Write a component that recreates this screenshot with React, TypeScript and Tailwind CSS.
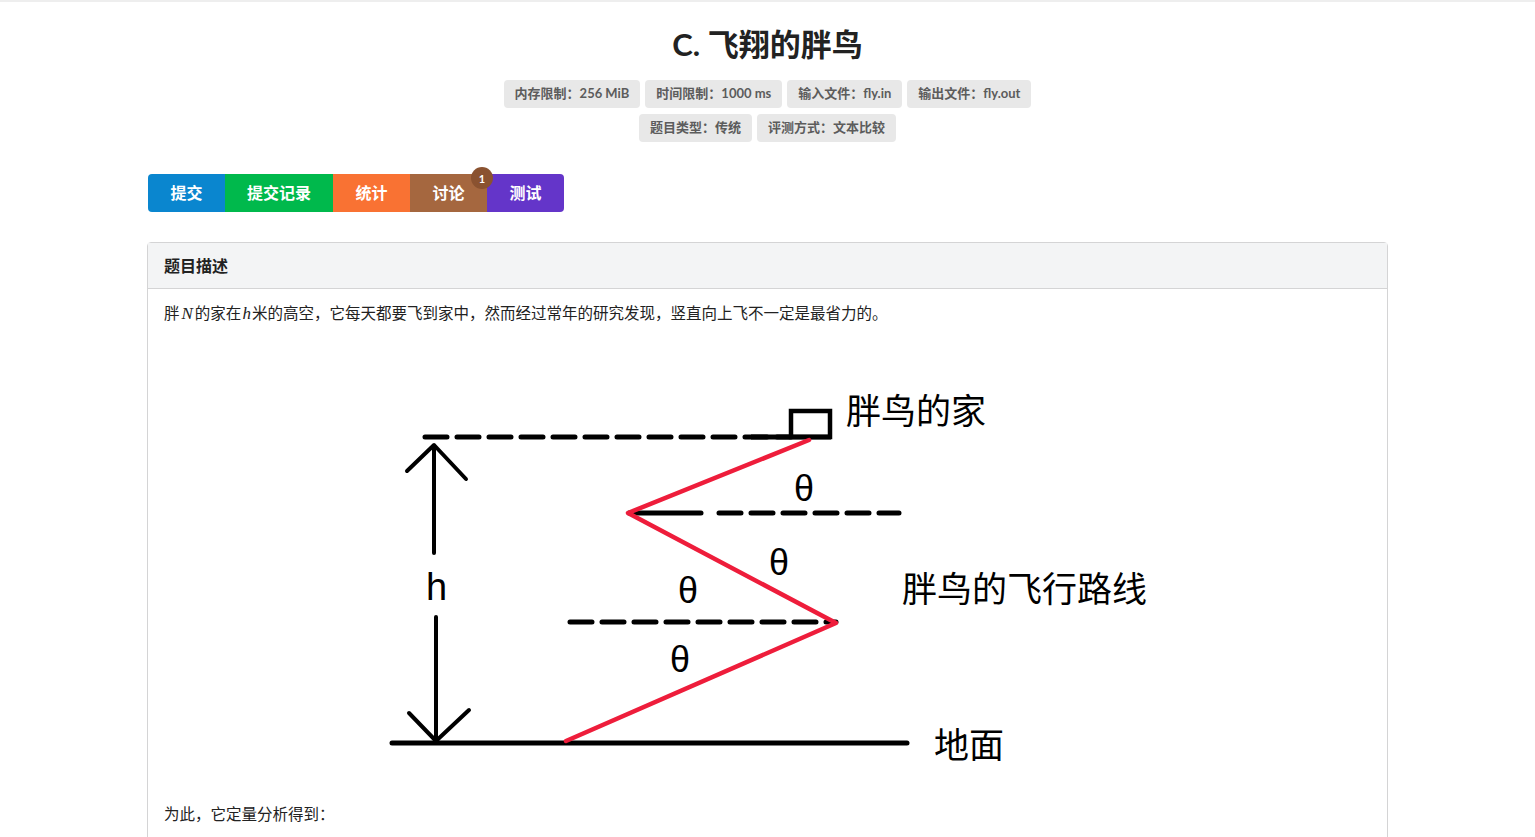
import React from "react";

const font = { fontFamily: 'Lato, "Noto Sans CJK SC", sans-serif' };

function Badge({ children }: { children: React.ReactNode }) {
  return (
    <span className="inline-flex items-center h-[28px] px-[11px] rounded-[4px] bg-[#e8e8e8] text-[13px] font-bold text-[#5c5c5c]">
      {children}
    </span>
  );
}

function Diagram() {
  const dash = "22 10";
  return (
    <svg
      width={780}
      height={460}
      viewBox="377 340 780 460"
      className="block mx-auto"
    >
      {/* top dashed line */}
      <line x1={424} y1={437} x2={790} y2={437} stroke="#000" strokeWidth={5} strokeDasharray={dash} strokeLinecap="round" />
      <line x1={750} y1={437} x2={830} y2={437} stroke="#000" strokeWidth={5} />
      {/* home box */}
      <rect x={790} y={411} width={39} height={26} fill="none" stroke="#000" strokeWidth={4.5} />
      {/* middle dashed */}
      <line x1={628} y1={513} x2={700} y2={513} stroke="#000" strokeWidth={5} strokeLinecap="round" />
      <line x1={718} y1={513} x2={898} y2={513} stroke="#000" strokeWidth={5} strokeDasharray={dash} strokeLinecap="round" />
      {/* lower dashed */}
      <line x1={569} y1={622} x2={835} y2={622} stroke="#000" strokeWidth={5} strokeDasharray={dash} strokeLinecap="round" />
      {/* ground */}
      <line x1={391} y1={743} x2={906} y2={743} stroke="#000" strokeWidth={5} strokeLinecap="round" />
      {/* up arrow */}
      <line x1={433} y1={446} x2={433} y2={553} stroke="#000" strokeWidth={4} strokeLinecap="round" />
      <polyline points="406,471 433,445 465,479" fill="none" stroke="#000" strokeWidth={4} strokeLinecap="round" strokeLinejoin="round" />
      {/* down arrow */}
      <line x1={435} y1={617} x2={435} y2={740} stroke="#000" strokeWidth={4} strokeLinecap="round" />
      <polyline points="408,713 435,741 468,710" fill="none" stroke="#000" strokeWidth={4} strokeLinecap="round" strokeLinejoin="round" />
      {/* red path */}
      <polyline
        points="808,440 627,513 835,623 565,741"
        fill="none"
        stroke="#ee1d3b"
        strokeWidth={4.5}
        strokeLinecap="round"
        strokeLinejoin="round"
      />
      {/* labels */}
      <g fontFamily='"Liberation Sans", Arial, sans-serif' fontSize={38} fill="#000">
        <text x={425} y={600}>h</text>
      </g>
      <g fontFamily='"Liberation Sans", "DejaVu Sans", sans-serif' fontSize={36} fill="#000">
        <text x={793} y={501}>θ</text>
        <text x={768} y={575}>θ</text>
        <text x={677} y={603}>θ</text>
        <text x={669} y={672}>θ</text>
      </g>
      <g fontFamily='"Noto Sans CJK SC", sans-serif' fontSize={35} fill="#000">
        <text x={845} y={424}>胖鸟的家</text>
        <text x={901} y={602}>胖鸟的飞行路线</text>
        <text x={933} y={758}>地面</text>
      </g>
    </svg>
  );
}

export default function App() {
  return (
    <div className="min-h-screen bg-white border-t-2 border-[#eeeeee]" style={font}>
      <div className="flex flex-col items-center">
        <h1 className="mt-[22px] text-[31px] leading-[40px] font-bold text-[#222]">C. 飞翔的胖鸟</h1>
        <div className="mt-[16px] flex flex-wrap justify-center gap-[5px] w-[560px]">
          <Badge>内存限制：256 MiB</Badge>
          <Badge>时间限制：1000 ms</Badge>
          <Badge>输入文件：fly.in</Badge>
          <Badge>输出文件：fly.out</Badge>
        </div>
        <div className="mt-[6px] flex justify-center gap-[5px]">
          <Badge>题目类型：传统</Badge>
          <Badge>评测方式：文本比较</Badge>
        </div>
      </div>

      <div className="mx-[147px] mt-[32px]">
        <div className="ml-[1px] flex h-[38px] w-fit text-[16px] font-bold text-white">
          <button className="w-[77px] rounded-l-[4px] bg-[#0a86cf]">提交</button>
          <button className="w-[108px] bg-[#00b94c]">提交记录</button>
          <button className="w-[77px] bg-[#f97233]">统计</button>
          <button className="relative w-[77px] bg-[#a5673f]">
            讨论
            <span className="absolute right-[-6px] top-[-7px] flex h-[22px] w-[22px] items-center justify-center rounded-full bg-[#8a5230] text-[11px] font-bold leading-none">1</span>
          </button>
          <button className="w-[77px] rounded-r-[4px] bg-[#6435c9]">测试</button>
        </div>

        <div className="mt-[30px] rounded-[4px] border border-[#d4d4d5]">
          <div className="flex h-[46px] items-center border-b border-[#d4d4d5] bg-[#f3f4f5] px-[16px] text-[16px] font-bold text-[#222]">
            题目描述
          </div>
          <div className="px-[16px] pt-[13px] text-[15.5px] leading-[22px] text-[#222]">
            <p>
              胖<span className="mx-[2px] italic font-light text-[17px]" style={{ fontFamily: '"Liberation Serif", serif' }}>N</span>的家在<span className="mx-[1px] italic text-[17px]" style={{ fontFamily: '"Liberation Serif", serif' }}>h</span>米的高空，它每天都要飞到家中，然而经过常年的研究发现，竖直向上飞不一定是最省力的。
            </p>
            <div className="mt-[15px]">
              <Diagram />
            </div>
            <p className="mt-[3px] pb-[16px]">为此，它定量分析得到：</p>
          </div>
        </div>
      </div>
    </div>
  );
}
